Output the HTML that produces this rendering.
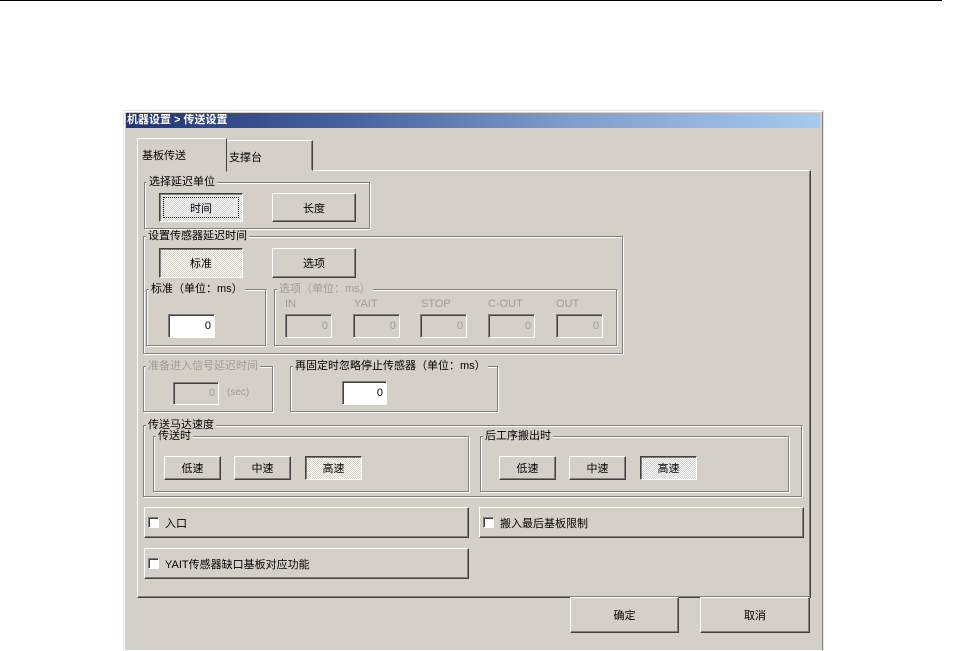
<!DOCTYPE html>
<html><head><meta charset="utf-8"><style>
*{margin:0;padding:0;box-sizing:border-box}
body{width:958px;height:644px;background:#fff;position:relative;overflow:hidden;font:11px "Liberation Sans","WenQuanYi Zen Hei","Noto Sans CJK SC",sans-serif;color:#000}
div,span{position:absolute}
.dlg{left:124px;top:111px;width:699px;height:540px;background:#d4d0c8;border:1px solid #fff;border-right-color:#808080;outline:1px solid #e8e6e0}
.title{left:126px;top:113px;width:694px;height:15px;background:linear-gradient(90deg,#1f3575,#4a68a3 35%,#7f9fcc 65%,#a6caf0);color:#fff;font-weight:bold;font-size:11px;line-height:15px;padding-left:1px}
.raised{border:1px solid;border-color:#fff #404040 #404040 #fff;box-shadow:inset -1px -1px 0 #808080}
.btn{text-align:center;background:#d4d0c8;border:1px solid;border-color:#fff #404040 #404040 #fff;box-shadow:inset -1px -1px 0 #808080;display:flex;align-items:center;justify-content:center}
.press{background:repeating-conic-gradient(#d4d0c8 0 25%,#fff 0 50%) 0 0/2px 2px;border-color:#404040 #fff #fff #404040;box-shadow:inset 1px 1px 0 #808080}
.grp{border:1px solid #808080;box-shadow:1px 1px 0 #fff,inset 1px 1px 0 #fff}
.lbl{background:#d4d0c8;padding:0 2px;line-height:12px;white-space:nowrap}
.dis{color:#a09d96}
.inp{background:#fff;border:1px solid;border-color:#808080 #fff #fff #808080;box-shadow:inset 1px 1px 0 #404040;text-align:right;padding-right:3px;line-height:20px}
.inpd{background:#d4d0c8;color:#a09d96}
.cb{width:11px;height:11px;background:#fff;border:1px solid;border-color:#808080 #fff #fff #808080;box-shadow:inset 1px 1px 0 #404040}
</style></head><body>
<div style="left:0;top:0;width:942px;height:1px;background:#000"></div>
<div class="dlg"></div>
<div class="title">机器设置 &gt; 传送设置</div>

<!-- tabs -->
<div style="left:137px;top:170px;width:674px;height:428px;border:1px solid;border-color:#fff #404040 #404040 #fff;box-shadow:inset -1px -1px 0 #808080"></div>
<div style="left:226px;top:140px;width:87px;height:31px;border:1px solid;border-color:#fff #404040 transparent #fff;box-shadow:inset -1px 0 0 #808080;background:#d4d0c8;padding:8px 0 0 2px">支撑台</div>
<div style="left:137px;top:138px;width:90px;height:34px;border:1px solid;border-color:#fff #404040 transparent #fff;background:#d4d0c8;padding:8px 0 0 4px">基板传送</div>

<!-- group1 -->
<div class="grp" style="left:144px;top:182px;width:226px;height:47px"></div>
<span class="lbl" style="left:147px;top:176px">选择延迟单位</span>
<div class="btn press" style="left:159px;top:193px;width:84px;height:29px;outline:1px dotted #000;outline-offset:-5px">时间</div>
<div class="btn" style="left:272px;top:193px;width:84px;height:29px">长度</div>

<!-- group2 -->
<div class="grp" style="left:143px;top:236px;width:480px;height:118px"></div>
<span class="lbl" style="left:146px;top:230px">设置传感器延迟时间</span>
<div class="btn press" style="left:159px;top:248px;width:84px;height:30px">标准</div>
<div class="btn" style="left:272px;top:248px;width:84px;height:30px">选项</div>
<div class="grp" style="left:146px;top:289px;width:120px;height:57px"></div>
<span class="lbl" style="left:149px;top:283px">标准（单位：ms）</span>
<div class="inp" style="left:168px;top:314px;width:47px;height:24px;line-height:22px">0</div>
<div class="grp" style="left:274px;top:289px;width:343px;height:57px"></div>
<span class="lbl dis" style="left:277px;top:283px">选项（单位：ms）</span>
<span class="dis" style="left:285px;top:298px">IN</span>
<span class="dis" style="left:354px;top:298px">YAIT</span>
<span class="dis" style="left:421px;top:298px">STOP</span>
<span class="dis" style="left:488px;top:298px">C-OUT</span>
<span class="dis" style="left:556px;top:298px">OUT</span>
<div class="inp inpd" style="left:285px;top:314px;width:47px;height:24px;line-height:22px">0</div>
<div class="inp inpd" style="left:353px;top:314px;width:47px;height:24px;line-height:22px">0</div>
<div class="inp inpd" style="left:420px;top:314px;width:47px;height:24px;line-height:22px">0</div>
<div class="inp inpd" style="left:488px;top:314px;width:47px;height:24px;line-height:22px">0</div>
<div class="inp inpd" style="left:556px;top:314px;width:47px;height:24px;line-height:22px">0</div>

<!-- group3 -->
<div class="grp" style="left:143px;top:366px;width:130px;height:46px"></div>
<span class="lbl dis" style="left:146px;top:360px">准备进入信号延迟时间</span>
<div class="inp inpd" style="left:173px;top:382px;width:46px;height:23px;line-height:21px">0</div>
<span class="dis" style="left:227px;top:387px;font-size:10px">(sec)</span>
<div class="grp" style="left:290px;top:366px;width:208px;height:46px"></div>
<span class="lbl" style="left:293px;top:360px">再固定时忽略停止传感器（单位：ms）</span>
<div class="inp" style="left:342px;top:381px;width:45px;height:24px;line-height:22px">0</div>

<!-- group4 -->
<div class="grp" style="left:143px;top:425px;width:659px;height:72px"></div>
<span class="lbl" style="left:146px;top:419px">传送马达速度</span>
<div class="grp" style="left:153px;top:436px;width:316px;height:56px"></div>
<span class="lbl" style="left:156px;top:430px">传送时</span>
<div class="btn" style="left:164px;top:456px;width:57px;height:24px">低速</div>
<div class="btn" style="left:234px;top:456px;width:57px;height:24px">中速</div>
<div class="btn press" style="left:305px;top:456px;width:57px;height:24px">高速</div>
<div class="grp" style="left:480px;top:436px;width:309px;height:56px"></div>
<span class="lbl" style="left:483px;top:430px">后工序搬出时</span>
<div class="btn" style="left:499px;top:456px;width:57px;height:24px">低速</div>
<div class="btn" style="left:569px;top:456px;width:57px;height:24px">中速</div>
<div class="btn press" style="left:640px;top:456px;width:57px;height:24px">高速</div>

<!-- checkboxes -->
<div class="btn" style="left:144px;top:507px;width:325px;height:31px;justify-content:flex-start;padding-left:3px"><span class="cb" style="position:static;display:inline-block;margin-right:6px"></span>入口</div>
<div class="btn" style="left:479px;top:507px;width:325px;height:31px;justify-content:flex-start;padding-left:3px"><span class="cb" style="position:static;display:inline-block;margin-right:6px"></span>搬入最后基板限制</div>
<div class="btn" style="left:144px;top:548px;width:325px;height:31px;justify-content:flex-start;padding-left:3px"><span class="cb" style="position:static;display:inline-block;margin-right:6px"></span>YAIT传感器缺口基板对应功能</div>

<div class="btn" style="left:570px;top:597px;width:109px;height:36px">确定</div>
<div class="btn" style="left:700px;top:597px;width:110px;height:36px">取消</div>
</body></html>
